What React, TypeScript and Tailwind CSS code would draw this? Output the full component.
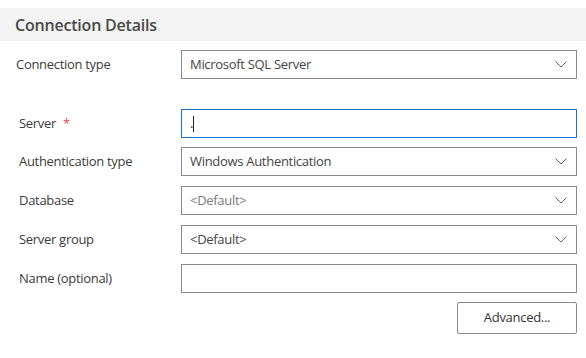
function Chevron() {
  return (
    <svg width="12" height="7" viewBox="0 0 12 7" className="shrink-0">
      <path d="M0.5 0.5 L6 6 L11.5 0.5" fill="none" stroke="#666" strokeWidth="1" />
    </svg>
  );
}

function Row({
  label,
  required,
  children,
  indent = "pl-[19px]",
  className = "",
}: {
  label: string;
  required?: boolean;
  children: React.ReactNode;
  indent?: string;
  className?: string;
}) {
  return (
    <div className={`flex items-center ${className}`}>
      <div className={`w-[181px] shrink-0 ${indent} text-[13px] tracking-[-0.3px] text-[#3b3b3b]`}>
        {label}
        {required && <span className="ml-[7px] text-[#e5484d]">*</span>}
      </div>
      {children}
    </div>
  );
}

function Select({ value, muted }: { value: string; muted?: boolean }) {
  return (
    <div className="flex h-[29px] w-[396px] items-center justify-between border border-[#8a8a8a] pl-[8px] pr-[9px]">
      <span className={`text-[13px] tracking-[-0.3px] ${muted ? "text-[#7a7a7a]" : "text-[#444]"}`}>{value}</span>
      <Chevron />
    </div>
  );
}

export default function App() {
  return (
    <div
      className="h-[358px] w-[586px] overflow-hidden bg-white pt-[8px]"
      style={{ fontFamily: "'Open Sans', 'Noto Sans', sans-serif" }}
    >
      {/* header */}
      <div className="flex h-[33px] items-center bg-[#f3f3f3] pl-[15px]">
        <span className="text-[16px] font-semibold tracking-[-0.2px] text-[#484848]">Connection Details</span>
      </div>

      <div className="mt-[9px] flex flex-col">
        <Row label="Connection type" indent="pl-[16px]">
          <Select value="Microsoft SQL Server" />
        </Row>

        <Row label="Server" required className="mt-[30px]">
          <div className="flex h-[29px] w-[396px] items-center border border-[#1a73c8] pl-[8px]">
            <span className="text-[13px] text-[#333]">.</span>
            <span className="h-[16px] w-px bg-[#222]" />
          </div>
        </Row>

        <Row label="Authentication type" className="mt-[9px]">
          <Select value="Windows Authentication" />
        </Row>

        <Row label="Database" className="mt-[10px]">
          <Select value="<Default>" muted />
        </Row>

        <Row label="Server group" className="mt-[10px]">
          <Select value="<Default>" />
        </Row>

        <Row label="Name (optional)" className="mt-[10px]">
          <div className="h-[29px] w-[396px] border border-[#8a8a8a]" />
        </Row>

        <div className="mt-[9px] flex justify-end pr-[9px]">
          <button className="h-[32px] w-[120px] rounded-[2px] border border-[#8a8a8a] bg-white text-[13px] tracking-[-0.3px] text-[#333]">
            Advanced...
          </button>
        </div>
      </div>
    </div>
  );
}
